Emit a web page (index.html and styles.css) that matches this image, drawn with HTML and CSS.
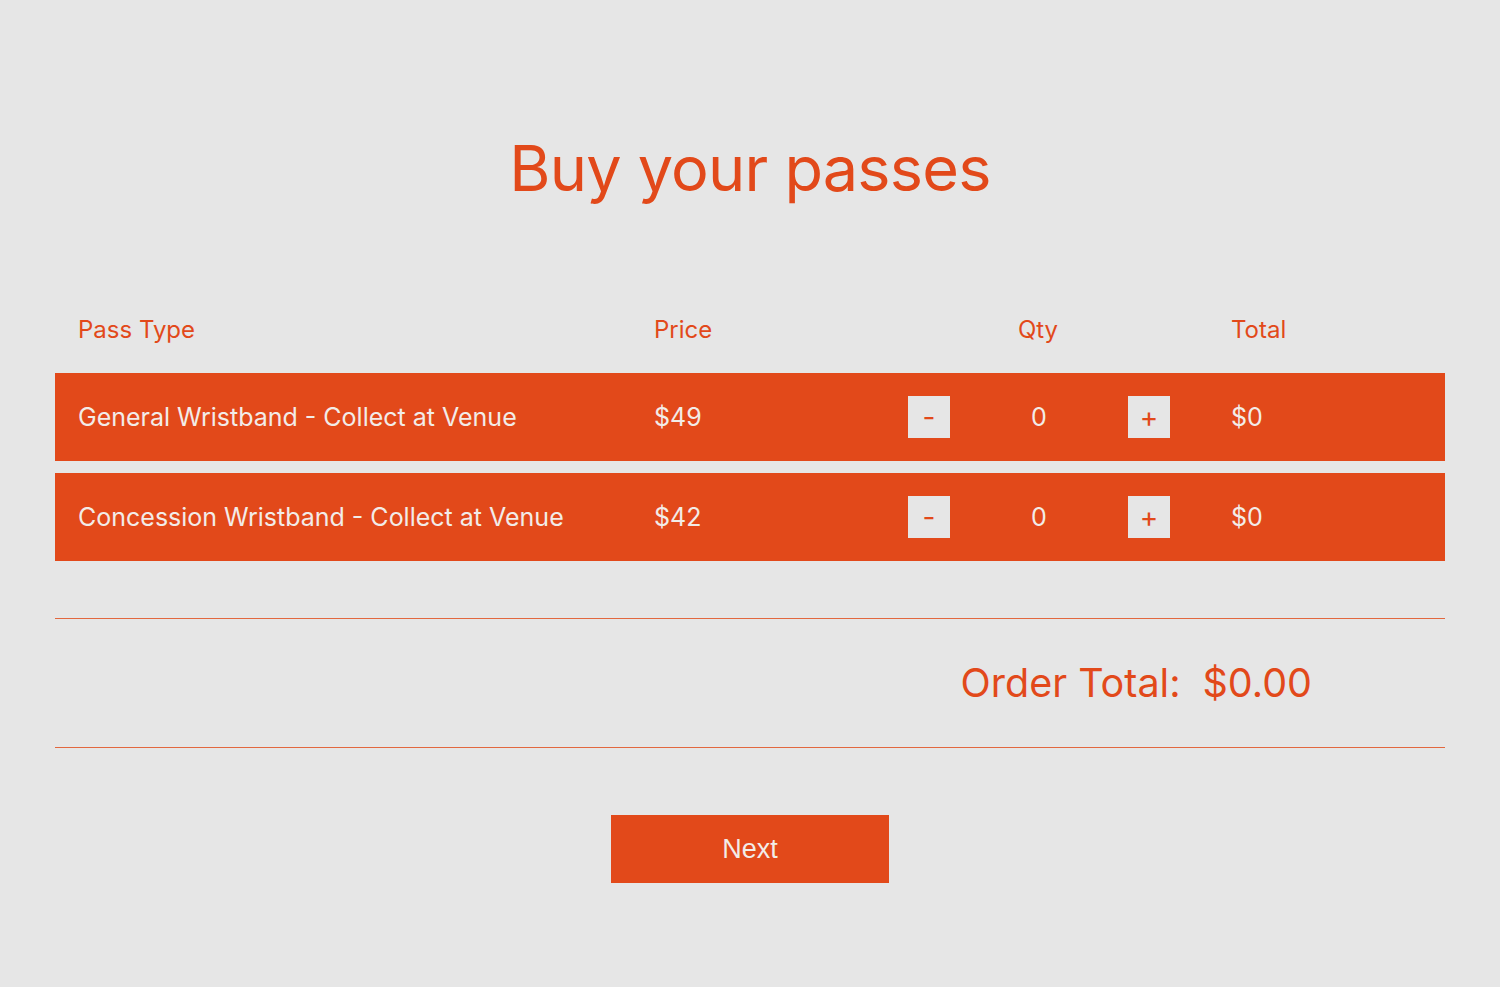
FILE: index.html
```html
<!DOCTYPE html>
<html lang="en">
<head>
    <meta charset="UTF-8">
    <meta name="viewport" content="width=device-width, initial-scale=1.0">
    <title>Buy your passes</title>
    <link rel="stylesheet" href="styles.css">
</head>
<body>
    <main class="checkout">
        <h1 class="title">Buy your passes</h1>

        <div class="passes">
            <div class="pass-row pass-head">
                <div class="cell">Pass Type</div>
                <div class="cell">Price</div>
                <div class="cell qty-head">Qty</div>
                <div class="cell">Total</div>
            </div>
            <div class="pass-row pass-item">
                <div class="cell">General Wristband - Collect at Venue</div>
                <div class="cell">$49</div>
                <div class="cell qty">
                    <button class="step">-</button>
                    <span class="count">0</span>
                    <button class="step">+</button>
                </div>
                <div class="cell">$0</div>
            </div>
            <div class="pass-row pass-item">
                <div class="cell">Concession Wristband - Collect at Venue</div>
                <div class="cell">$42</div>
                <div class="cell qty">
                    <button class="step">-</button>
                    <span class="count">0</span>
                    <button class="step">+</button>
                </div>
                <div class="cell">$0</div>
            </div>
        </div>

        <div class="order-total">
            <span class="label">Order Total:</span>
            <span class="amount">$0.00</span>
        </div>

        <div class="actions">
            <button class="next">Next</button>
        </div>
    </main>
</body>
</html>
```

FILE: styles.css
```css
body {
    margin: 0;
    background-color: #e6e6e6;
    color: #e2491a;
    font-family: "Inter", "Liberation Sans", sans-serif;
}
.checkout {
    width: 1390px;
    margin: 0 auto;
    padding-top: 128px;
}
.title {
    margin: 0;
    font-size: 63px;
    line-height: 80px;
    font-weight: 400;
    text-align: center;
    letter-spacing: -0.8px;
}
.passes {
    margin-top: 77px;
}
.pass-row {
    display: grid;
    grid-template-columns: 576px 253px 324px 1fr;
    align-items: center;
    height: 88px;
    font-size: 24px;
}
.pass-item + .pass-item {
    margin-top: 12px; /* espaço entre as linhas */
}
.cell {
    padding-left: 23px;
}
.pass-head .qty-head {
    padding-left: 0;
    text-align: center;
    margin-right: 16px;
}
.pass-item {
    background-color: #e2491a;
    color: #f2ece8;
    font-size: 25px;
}
.qty {
    padding-left: 24px;
    display: flex;
    align-items: center;
    width: 262px;
    justify-content: space-between;
}
.step {
    width: 42px;
    height: 42px;
    border: none;
    padding: 0;
    background-color: #e6e6e6;
    color: #e2491a;
    font-family: "Inter", "Liberation Sans", sans-serif;
    font-size: 28px;
}
.count {
    font-size: 25px;
}
.order-total {
    margin-top: 57px;
    height: 128px;
    border-top: 1px solid #e2683f;
    border-bottom: 1px solid #e2683f;
    display: flex;
    align-items: center;
    justify-content: flex-end;
    padding-right: 133px;
    gap: 22px;
    font-size: 39.5px;
}
.actions {
    display: flex;
    justify-content: center;
    padding-top: 67px;
}
.next {
    width: 278px;
    height: 68px;
    border: none;
    background-color: #e2491a;
    color: #f2ece8;
    font-family: "Liberation Sans", Arial, sans-serif;
    font-size: 27px;
}
```
